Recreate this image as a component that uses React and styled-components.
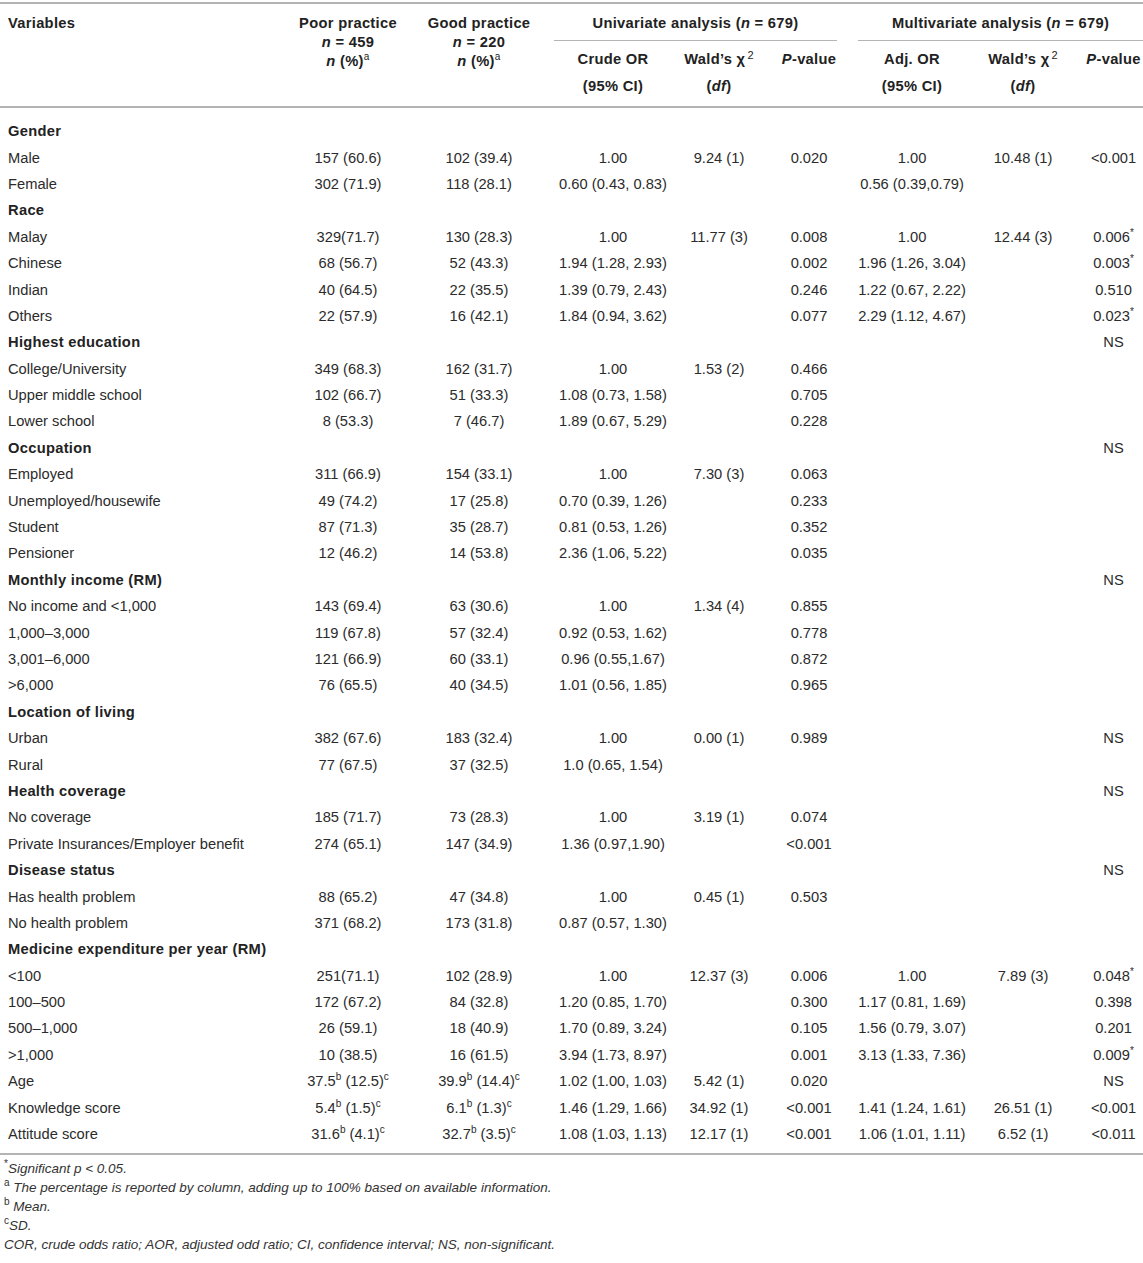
import React from "react";
import styled, { createGlobalStyle } from "styled-components";

const GlobalStyle = createGlobalStyle`
    html, body {
        margin: 0;
        padding: 0;
        background: #fff;
    }
    body {
        font-family: "Liberation Sans", Arial, Helvetica, sans-serif;
        color: #2b2b2b;
    }
`;

// column widths, left to right (page is 1143 wide)
const COLS = [290, 116, 146, 122, 90, 90, 116, 106, 67];

const ROWS = [
    { group: "Gender" },
    ["Male", "157 (60.6)", "102 (39.4)", "1.00", "9.24 (1)", "0.020", "1.00", "10.48 (1)", "<0.001"],
    ["Female", "302 (71.9)", "118 (28.1)", "0.60 (0.43, 0.83)", "", "", "0.56 (0.39,0.79)", "", ""],
    { group: "Race" },
    ["Malay", "329(71.7)", "130 (28.3)", "1.00", "11.77 (3)", "0.008", "1.00", "12.44 (3)", "0.006^*"],
    ["Chinese", "68 (56.7)", "52 (43.3)", "1.94 (1.28, 2.93)", "", "0.002", "1.96 (1.26, 3.04)", "", "0.003^*"],
    ["Indian", "40 (64.5)", "22 (35.5)", "1.39 (0.79, 2.43)", "", "0.246", "1.22 (0.67, 2.22)", "", "0.510"],
    ["Others", "22 (57.9)", "16 (42.1)", "1.84 (0.94, 3.62)", "", "0.077", "2.29 (1.12, 4.67)", "", "0.023^*"],
    { group: "Highest education", ns: true },
    ["College/University", "349 (68.3)", "162 (31.7)", "1.00", "1.53 (2)", "0.466", "", "", ""],
    ["Upper middle school", "102 (66.7)", "51 (33.3)", "1.08 (0.73, 1.58)", "", "0.705", "", "", ""],
    ["Lower school", "8 (53.3)", "7 (46.7)", "1.89 (0.67, 5.29)", "", "0.228", "", "", ""],
    { group: "Occupation", ns: true },
    ["Employed", "311 (66.9)", "154 (33.1)", "1.00", "7.30 (3)", "0.063", "", "", ""],
    ["Unemployed/housewife", "49 (74.2)", "17 (25.8)", "0.70 (0.39, 1.26)", "", "0.233", "", "", ""],
    ["Student", "87 (71.3)", "35 (28.7)", "0.81 (0.53, 1.26)", "", "0.352", "", "", ""],
    ["Pensioner", "12 (46.2)", "14 (53.8)", "2.36 (1.06, 5.22)", "", "0.035", "", "", ""],
    { group: "Monthly income (RM)", ns: true },
    ["No income and <1,000", "143 (69.4)", "63 (30.6)", "1.00", "1.34 (4)", "0.855", "", "", ""],
    ["1,000–3,000", "119 (67.8)", "57 (32.4)", "0.92 (0.53, 1.62)", "", "0.778", "", "", ""],
    ["3,001–6,000", "121 (66.9)", "60 (33.1)", "0.96 (0.55,1.67)", "", "0.872", "", "", ""],
    [">6,000", "76 (65.5)", "40 (34.5)", "1.01 (0.56, 1.85)", "", "0.965", "", "", ""],
    { group: "Location of living" },
    ["Urban", "382 (67.6)", "183 (32.4)", "1.00", "0.00 (1)", "0.989", "", "", "NS"],
    ["Rural", "77 (67.5)", "37 (32.5)", "1.0 (0.65, 1.54)", "", "", "", "", ""],
    { group: "Health coverage", ns: true },
    ["No coverage", "185 (71.7)", "73 (28.3)", "1.00", "3.19 (1)", "0.074", "", "", ""],
    ["Private Insurances/Employer benefit", "274 (65.1)", "147 (34.9)", "1.36 (0.97,1.90)", "", "<0.001", "", "", ""],
    { group: "Disease status", ns: true },
    ["Has health problem", "88 (65.2)", "47 (34.8)", "1.00", "0.45 (1)", "0.503", "", "", ""],
    ["No health problem", "371 (68.2)", "173 (31.8)", "0.87 (0.57, 1.30)", "", "", "", "", ""],
    { group: "Medicine expenditure per year (RM)" },
    ["<100", "251(71.1)", "102 (28.9)", "1.00", "12.37 (3)", "0.006", "1.00", "7.89 (3)", "0.048^*"],
    ["100–500", "172 (67.2)", "84 (32.8)", "1.20 (0.85, 1.70)", "", "0.300", "1.17 (0.81, 1.69)", "", "0.398"],
    ["500–1,000", "26 (59.1)", "18 (40.9)", "1.70 (0.89, 3.24)", "", "0.105", "1.56 (0.79, 3.07)", "", "0.201"],
    [">1,000", "10 (38.5)", "16 (61.5)", "3.94 (1.73, 8.97)", "", "0.001", "3.13 (1.33, 7.36)", "", "0.009^*"],
    ["Age", "37.5^b (12.5)^c", "39.9^b (14.4)^c", "1.02 (1.00, 1.03)", "5.42 (1)", "0.020", "", "", "NS"],
    ["Knowledge score", "5.4^b (1.5)^c", "6.1^b (1.3)^c", "1.46 (1.29, 1.66)", "34.92 (1)", "<0.001", "1.41 (1.24, 1.61)", "26.51 (1)", "<0.001"],
    ["Attitude score", "31.6^b (4.1)^c", "32.7^b (3.5)^c", "1.08 (1.03, 1.13)", "12.17 (1)", "<0.001", "1.06 (1.01, 1.11)", "6.52 (1)", "<0.011"],
];

// "37.5^b" -> 37.5<sup>b</sup>
function fmt(text) {
    const parts = text.split(/\^(.)/);
    return parts.map((p, i) => (i % 2 ? <Sup key={i}>{p}</Sup> : p));
}

export default function App() {
    return (
        <Page>
            <GlobalStyle />
            <Table>
                <colgroup>
                    {COLS.map((w, i) => (
                        <col key={i} style={{ width: w }} />
                    ))}
                </colgroup>
                <thead>
                    <tr>
                        <StackHead rowSpan={2} left>
                            Variables
                        </StackHead>
                        <StackHead rowSpan={2}>
                            Poor practice
                            <br />
                            <i>n</i> = 459
                            <br />
                            <i>n</i> (%)<Sup>a</Sup>
                        </StackHead>
                        <StackHead rowSpan={2}>
                            Good practice
                            <br />
                            <i>n</i> = 220
                            <br />
                            <i>n</i> (%)<Sup>a</Sup>
                        </StackHead>
                        <GroupHead colSpan={3}>
                            <GroupLine $ml={2} $mr={17}>
                                Univariate analysis (<i>n</i> = 679)
                            </GroupLine>
                        </GroupHead>
                        <GroupHead colSpan={3}>
                            <GroupLine $ml={4} $mr={0}>
                                Multivariate analysis (<i>n</i> = 679)
                            </GroupLine>
                        </GroupHead>
                    </tr>
                    <tr>
                        <SubHead>
                            Crude OR
                            <br />
                            (95% CI)
                        </SubHead>
                        <SubHead>
                            Wald’s χ<Sup $big>2</Sup>
                            <br />(<i>df</i>)
                        </SubHead>
                        <SubHead>
                            <i>P</i>-value
                        </SubHead>
                        <SubHead>
                            Adj. OR
                            <br />
                            (95% CI)
                        </SubHead>
                        <SubHead>
                            Wald’s χ<Sup $big>2</Sup>
                            <br />(<i>df</i>)
                        </SubHead>
                        <SubHead $shift={4}>
                            <i>P</i>-value
                        </SubHead>
                    </tr>
                </thead>
                <tbody>
                    {ROWS.map((row, r) =>
                        row.group ? (
                            <Row key={r} $first={r === 0}>
                                <GroupCell colSpan={8}>{row.group}</GroupCell>
                                <Cell $shift={4}>{row.ns ? "NS" : ""}</Cell>
                            </Row>
                        ) : (
                            <Row key={r} $last={r === ROWS.length - 1}>
                                {row.map((v, c) =>
                                    c === 0 ? (
                                        <LabelCell key={c}>{v}</LabelCell>
                                    ) : (
                                        <Cell key={c} $shift={c === 8 ? 4 : 0}>
                                            {fmt(v)}
                                        </Cell>
                                    )
                                )}
                            </Row>
                        )
                    )}
                </tbody>
            </Table>
            <Notes>
                <Note>
                    <Sup>*</Sup>Significant <i>p</i> &lt; 0.05.
                </Note>
                <Note>
                    <Sup>a</Sup> The percentage is reported by column, adding up to 100% based on available
                    information.
                </Note>
                <Note>
                    <Sup>b</Sup> Mean.
                </Note>
                <Note>
                    <Sup>c</Sup>SD.
                </Note>
                <Note>COR, crude odds ratio; AOR, adjusted odd ratio; CI, confidence interval; NS, non-significant.</Note>
            </Notes>
        </Page>
    );
}

/**
 * STYLES
 */
const RULE = "#b4b4b4";

const Page = styled.div`
    width: 1143px;
    padding-top: 2px;
`;
const Table = styled.table`
    width: 1143px;
    table-layout: fixed;
    border-collapse: collapse;
    border-top: 2px solid ${RULE};
    border-bottom: 2px solid ${RULE};
    font-size: 14.7px;
`;
const Sup = styled.sup`
    font-size: ${(p) => (p.$big ? "11px" : "10px")};
    line-height: 0;
    vertical-align: ${(p) => (p.$big ? "5px" : "6px")};
    font-style: normal;
    font-weight: normal;
    margin-left: ${(p) => (p.$big ? "2px" : "0")};
`;
const HeadText = `
    font-weight: bold;
    color: #222;
    letter-spacing: 0.3px;
`;
const StackHead = styled.th`
    ${HeadText};
    vertical-align: top;
    text-align: ${(p) => (p.left ? "left" : "center")};
    padding: 10px 0 0 ${(p) => (p.left ? "8px" : "0")};
    line-height: 19px;
    border-bottom: 2px solid ${RULE};
`;
const GroupHead = styled.th`
    ${HeadText};
    padding: 10px 0 0;
    line-height: 19px;
`;
const GroupLine = styled.div`
    margin: 0 ${(p) => p.$mr}px 0 ${(p) => p.$ml}px;
    padding-bottom: 7px;
    border-bottom: 1px solid ${RULE};
    text-align: center;
`;
const SubHead = styled.th`
    ${HeadText};
    vertical-align: top;
    padding: 5px 0 6px;
    line-height: 27px;
    text-align: center;
    position: relative;
    left: ${(p) => p.$shift || 0}px;
    border-bottom: 2px solid ${RULE};
`;
const Row = styled.tr`
    & > td {
        height: 26.4px;
        line-height: 26px;
        padding-top: ${(p) => (p.$first ? "10px" : "0")};
        padding-bottom: ${(p) => (p.$last ? "6px" : "0")};
    }
`;
const GroupCell = styled.td`
    ${HeadText};
    text-align: left;
    padding-left: 8px;
    white-space: nowrap;
`;
const LabelCell = styled.td`
    text-align: left;
    padding-left: 8px;
    white-space: nowrap;
`;
const Cell = styled.td`
    text-align: center;
    white-space: nowrap;
    position: relative;
    left: ${(p) => p.$shift || 0}px;
`;
const Notes = styled.div`
    padding: 4px 0 0 4px;
    font-size: 13.5px;
    font-style: italic;
    color: #333;
`;
const Note = styled.div`
    line-height: 19px;
`;
